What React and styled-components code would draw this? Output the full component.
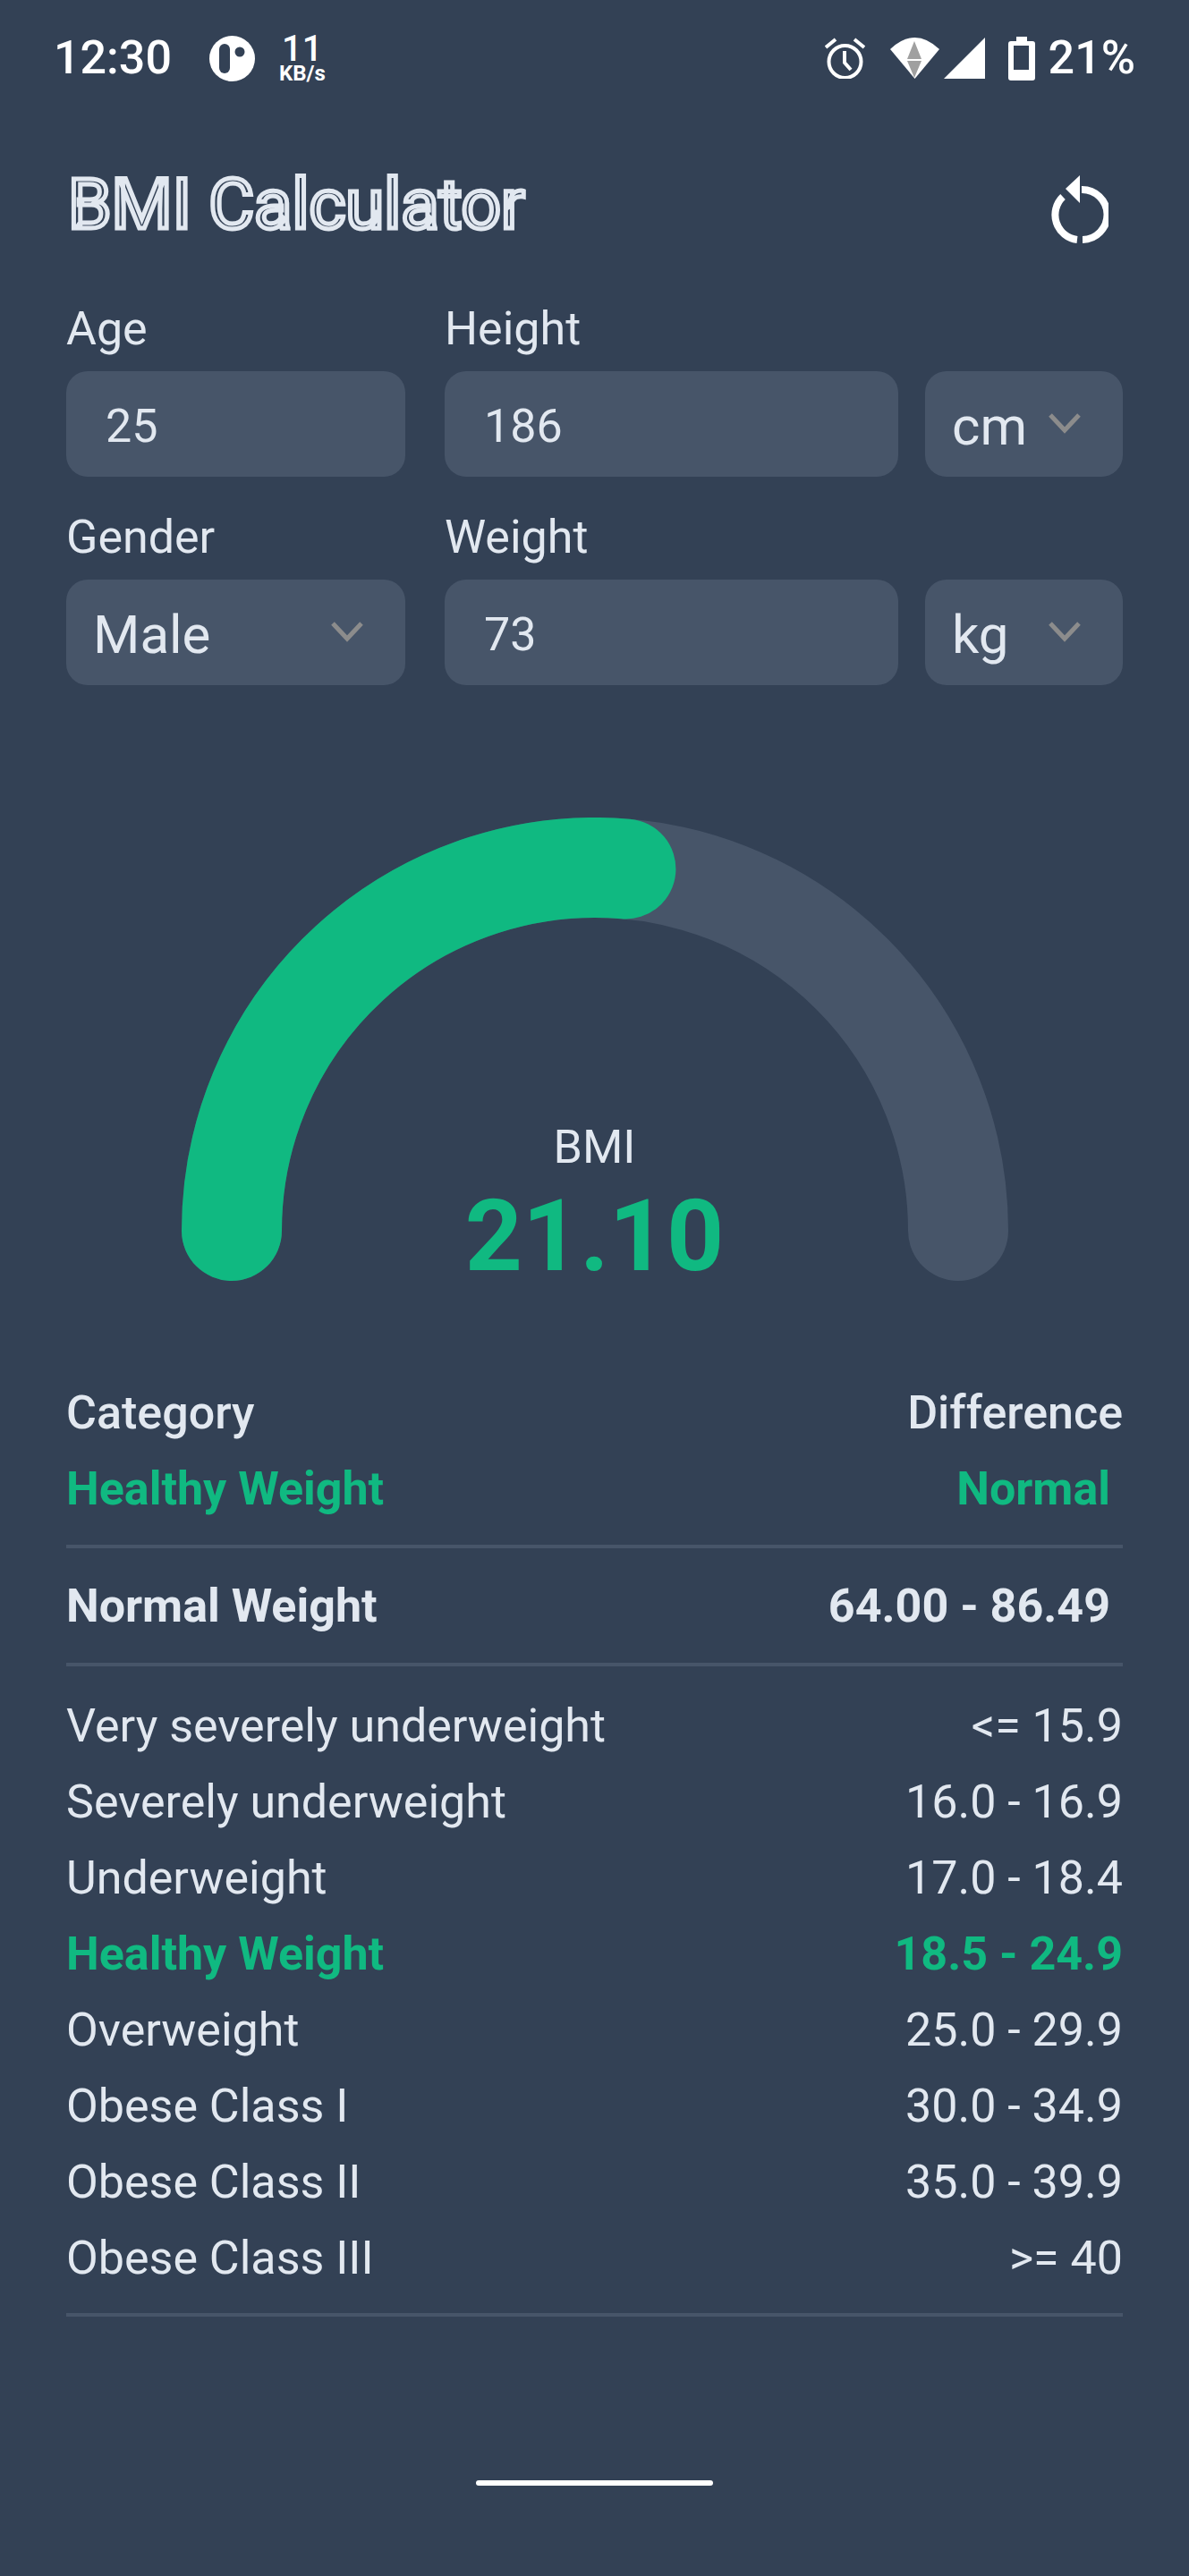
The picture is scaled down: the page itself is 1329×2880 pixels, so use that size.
import styled, { createGlobalStyle } from 'styled-components'

const GlobalStyle = createGlobalStyle`
    html, body {
        margin: 0;
        background: #334155;
    }
    * {
        box-sizing: border-box;
    }
`

const Page = styled.div`
    width: 1329px;
    height: 2880px;
    background: #334155;
    color: #e2e8f0;
    font-family: Roboto, 'Liberation Sans', sans-serif;
    overflow: hidden;
`

const StatusBar = styled.div`
    display: flex;
    align-items: center;
    height: 130px;
    padding: 0 60px 0 60px;
    color: #fff;
`

const StatusText = styled.span`
    font-size: 52px;
    line-height: 60px;
    font-weight: 500;
    margin-left: ${(p) => p.$gap || 0}px;
`

const NetSpeed = styled.div`
    display: flex;
    flex-direction: column;
    align-items: center;
    margin-left: 27px;
    font-weight: 500;
    span:first-child {
        font-size: 40px;
        line-height: 34px;
    }
    span:last-child {
        font-size: 24px;
        line-height: 20px;
        font-weight: 700;
    }
`

const StatusRight = styled.div`
    display: flex;
    align-items: center;
    margin-left: auto;
`

const StatusIcon = styled.svg`
    display: block;
    flex: none;
    margin-left: ${(p) => p.$gap || 0}px;
`

const Header = styled.div`
    display: flex;
    align-items: center;
    justify-content: space-between;
    height: 208px;
    padding: 0 90px 0 76px;
`

const Title = styled.h1`
    margin: 0 0 11px;
    font-size: 78px;
    line-height: 84px;
    font-weight: 400;
    color: #334155;
    -webkit-text-stroke: 5px #e2e8f0;
`

const Form = styled.div`
    display: flex;
    flex-direction: column;
    gap: 38px;
    padding: 0 74px;
`

const FormRow = styled.div`
    display: flex;
    gap: 44px;
`

const Field = styled.div`
    width: ${(p) => p.$width}px;
    flex: none;
`

const Label = styled.div`
    font-size: 52px;
    line-height: 60px;
    height: 60px;
    margin-bottom: 17px;
`

const Measure = styled.div`
    display: flex;
    gap: 30px;
`

const InputBox = styled.div`
    display: flex;
    align-items: center;
    height: 118px;
    padding: 5px 44px 0;
    width: ${(p) => p.$width}px;
    background: #475569;
    border-radius: 24px;
    font-size: 52px;
`

const SelectBox = styled.div`
    display: flex;
    align-items: center;
    justify-content: space-between;
    height: 118px;
    padding: 4px 46px 0 ${(p) => p.$pad}px;
    width: ${(p) => p.$width}px;
    flex: none;
    background: #475569;
    border-radius: 24px;
    font-size: 60px;
`

const Chevron = styled.svg`
    display: block;
    flex: none;
    margin-top: -7px;
`

const Gauge = styled.div`
    position: relative;
    width: 924px;
    height: 518px;
    margin: 148px auto 0;
`

const GaugeArc = styled.svg`
    display: block;
`

const GaugeText = styled.div`
    position: absolute;
    left: 0;
    right: 0;
    bottom: -6px;
    display: flex;
    flex-direction: column;
    align-items: center;
`

const GaugeLabel = styled.div`
    font-size: 52px;
    line-height: 60px;
    margin-bottom: 13px;
`

const GaugeValue = styled.div`
    font-size: 112px;
    line-height: 112px;
    font-weight: 700;
    color: #10b981;
`

const Results = styled.div`
    margin-top: 105px;
    padding: 0 74px;
`

const Row = styled.div`
    display: flex;
    justify-content: space-between;
    height: 85px;
    line-height: 85px;
    font-size: 52px;
    font-weight: ${(p) => p.$weight || 400};
    color: ${(p) => (p.$green ? '#10b981' : '#e2e8f0')};
    padding-right: ${(p) => (p.$inset ? 14 : 0)}px;
`

const Divider = styled.div`
    height: 4px;
    background: #475569;
    margin: ${(p) => p.$top}px 0 ${(p) => p.$bottom}px;
`

const HomeBar = styled.div`
    width: 265px;
    height: 6px;
    margin: 183px auto 0;
    background: #fff;
    border-radius: 3px;
`

const ranges = [
    ['Very severely underweight', '<= 15.9'],
    ['Severely underweight', '16.0 - 16.9'],
    ['Underweight', '17.0 - 18.4'],
    ['Healthy Weight', '18.5 - 24.9', true],
    ['Overweight', '25.0 - 29.9'],
    ['Obese Class I', '30.0 - 34.9'],
    ['Obese Class II', '35.0 - 39.9'],
    ['Obese Class III', '>= 40'],
]

const ChevronIcon = () => (
    <Chevron width='38' height='24' viewBox='0 0 38 24' fill='none'>
        <path d='M3 3 L19 20 L35 3' stroke='#8c8c8c' strokeWidth='5' />
    </Chevron>
)

const App = () => {
    // gauge runs over a half circle, fill stops a bit past the top
    const r = 406
    const cx = 462
    const cy = 462
    const fill = 0.527
    const angle = Math.PI * (1 - fill)
    const endX = cx + r * Math.cos(angle)
    const endY = cy - r * Math.sin(angle)

    return (
        <Page>
            <GlobalStyle />
            <StatusBar>
                <StatusText>12:30</StatusText>
                <StatusIcon $gap={42} width='51' height='51' viewBox='0 0 51 51'>
                    <circle cx='25.5' cy='25.5' r='25.5' fill='#fff' />
                    <rect x='11' y='9' width='12' height='33' rx='6' fill='#334155' />
                    <circle cx='34' cy='18' r='5.5' fill='#334155' />
                </StatusIcon>
                <NetSpeed>
                    <span>11</span>
                    <span>KB/s</span>
                </NetSpeed>
                <StatusRight>
                    <StatusIcon width='45' height='46' viewBox='0 0 45 46' fill='none' stroke='#fff'>
                        <circle cx='22.5' cy='27' r='18' strokeWidth='4' />
                        <path d='M22 15 V28 L29 36' strokeWidth='4' />
                        <path d='M1 11 L12 2 M44 11 L33 2' strokeWidth='4' />
                    </StatusIcon>
                    <StatusIcon $gap={28} width='55' height='46' viewBox='0 0 55 46'>
                        <path d='M0 13 Q27.5 -13 55 13 L27.5 46 Z' fill='#fff' />
                        <path d='M27 4 L35 24 H19 Z M19 26 H35 L27 45 Z' fill='#a0a0a0' />
                    </StatusIcon>
                    <StatusIcon $gap={5} width='46' height='46' viewBox='0 0 46 46'>
                        <path d='M46 0 V46 H0 Z' fill='#fff' />
                    </StatusIcon>
                    <StatusIcon $gap={26} width='30' height='49' viewBox='0 0 30 49'>
                        <path
                            fillRule='evenodd'
                            d='M9 0 H21 V5 H27 Q30 5 30 8 V46 Q30 49 27 49 H3 Q0 49 0 46 V8 Q0 5 3 5 H9 Z M6 10 V37 H23 V10 Z'
                            fill='#fff'
                        />
                    </StatusIcon>
                    <StatusText $gap={15}>21%</StatusText>
                </StatusRight>
            </StatusBar>

            <Header>
                <Title>BMI Calculator</Title>
                <svg width='64' height='76' viewBox='0 0 64 76' fill='none'>
                    <path d='M34 16 A28 28 0 0 1 35 72' stroke='#fff' strokeWidth='8' />
                    <path d='M29 72 A28 28 0 0 1 13 24' stroke='#fff' strokeWidth='8' />
                    <path d='M16 15 L32 0 V31 Z' fill='#fff' />
                </svg>
            </Header>

            <Form>
                <FormRow>
                    <Field $width={379}>
                        <Label>Age</Label>
                        <InputBox>25</InputBox>
                    </Field>
                    <Field>
                        <Label>Height</Label>
                        <Measure>
                            <InputBox $width={507}>186</InputBox>
                            <SelectBox $width={221} $pad={30}>
                                cm
                                <ChevronIcon />
                            </SelectBox>
                        </Measure>
                    </Field>
                </FormRow>
                <FormRow>
                    <Field $width={379}>
                        <Label>Gender</Label>
                        <SelectBox $pad={30}>
                            Male
                            <ChevronIcon />
                        </SelectBox>
                    </Field>
                    <Field>
                        <Label>Weight</Label>
                        <Measure>
                            <InputBox $width={507}>73</InputBox>
                            <SelectBox $width={221} $pad={30}>
                                kg
                                <ChevronIcon />
                            </SelectBox>
                        </Measure>
                    </Field>
                </FormRow>
            </Form>

            <Gauge>
                <GaugeArc width='924' height='518' viewBox='0 0 924 518' fill='none'>
                    <path
                        d={`M${cx - r} ${cy} A${r} ${r} 0 0 1 ${cx + r} ${cy}`}
                        stroke='#475569'
                        strokeWidth='112'
                        strokeLinecap='round'
                    />
                    <path
                        d={`M${cx - r} ${cy} A${r} ${r} 0 0 1 ${endX} ${endY}`}
                        stroke='#10b981'
                        strokeWidth='112'
                        strokeLinecap='round'
                    />
                </GaugeArc>
                <GaugeText>
                    <GaugeLabel>BMI</GaugeLabel>
                    <GaugeValue>21.10</GaugeValue>
                </GaugeText>
            </Gauge>

            <Results>
                <Row $weight={500}>
                    <span>Category</span>
                    <span>Difference</span>
                </Row>
                <Row $weight={700} $green $inset>
                    <span>Healthy Weight</span>
                    <span>Normal</span>
                </Row>
                <Divider $top={20} $bottom={22} />
                <Row $weight={700} $inset>
                    <span>Normal Weight</span>
                    <span>64.00 - 86.49</span>
                </Row>
                <Divider $top={21} $bottom={24} />
                {ranges.map(([name, range, active]) => (
                    <Row key={name} $green={active} $weight={active ? 700 : 400}>
                        <span>{name}</span>
                        <span>{range}</span>
                    </Row>
                ))}
                <Divider $top={19} $bottom={0} />
            </Results>

            <HomeBar />
        </Page>
    )
}

export default App
